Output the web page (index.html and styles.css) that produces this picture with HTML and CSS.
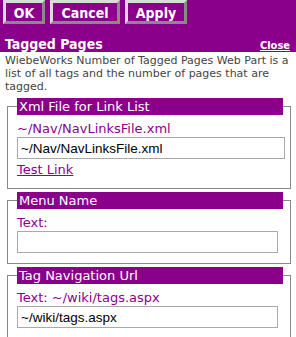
FILE: index.html
```html
<!DOCTYPE html>
<html>
<head>
<meta charset="utf-8">
<link rel="stylesheet" href="styles.css">
</head>
<body>
<div class="toolbar">
  <div class="buttons">
    <button class="btn">OK</button>
    <button class="btn">Cancel</button>
    <button class="btn">Apply</button>
  </div>
  <div class="title-row">
    <span class="title">Tagged Pages</span>
    <a class="close" href="#">Close</a>
  </div>
</div>
<p class="desc">WiebeWorks Number of Tagged Pages Web Part is a list of all tags and the number of pages that are tagged.</p>
<fieldset class="group">
  <legend class="legend">Xml File for Link List</legend>
  <div class="label">~/Nav/NavLinksFile.xml</div>
  <input class="field wide" type="text" value="~/Nav/NavLinksFile.xml">
  <a class="link" href="#">Test Link</a>
</fieldset>
<fieldset class="group">
  <legend class="legend">Menu Name</legend>
  <div class="label">Text:</div>
  <input class="field" type="text" value="">
</fieldset>
<fieldset class="group">
  <legend class="legend">Tag Navigation Url</legend>
  <div class="label">Text: ~/wiki/tags.aspx</div>
  <input class="field" type="text" value="~/wiki/tags.aspx">
</fieldset>
</body>
</html>
```
FILE: styles.css
```css
html, body {
  margin: 0;
  padding: 0;
  background: #fff;
}
body {
  width: 296px;
  font-family: "DejaVu Sans", Verdana, sans-serif;
}
.toolbar {
  background: #8b008b;
  height: 52px;
  display: flex;
  flex-direction: column;
}
.buttons {
  display: flex;
  gap: 5px;
}
.btn {
  background: #8b008b;
  color: #fff;
  font: bold 14px/16px "DejaVu Sans Condensed", "DejaVu Sans", sans-serif;
  border: 3px solid;
  border-color: #dcdcdc #8a8a8a #8a8a8a #dcdcdc;
  padding: 1px 0 0;
  height: 24px;
  margin: 0;
  box-sizing: border-box;
}
.btn:nth-child(1) { width: 42px; margin-left: 3px; }
.btn:nth-child(2) { width: 70px; }
.btn:nth-child(3) { width: 62px; }
.title-row {
  display: flex;
  justify-content: space-between;
  align-items: baseline;
  padding: 12px 6px 0 5px;
}
.title {
  color: #fff;
  font: bold 14px/16px "DejaVu Sans Condensed", "DejaVu Sans", sans-serif;
}
.close {
  color: #fff;
  font: bold 11px/13px "DejaVu Sans Condensed", "DejaVu Sans", sans-serif;
}
.desc {
  margin: 2px 5px 0 5px;
  color: #444;
  font-size: 11px;
  line-height: 13px;
}
.group {
  margin: 5px 5px 0 7px;
  border: 1px solid #888;
  padding: 0 5px 10px 9px;
  min-width: 0;
}
.group + .group { margin-top: 3px; }
.legend {
  background: #8b008b;
  color: #fff;
  font-size: 13px;
  line-height: 17px;
  padding: 0 2px;
  width: 266px;
  box-sizing: border-box;
}
.label {
  color: #8b008b;
  font-size: 13px;
  line-height: 16px;
  margin-top: 6px;
}
.field {
  display: block;
  box-sizing: border-box;
  width: 261px;
  height: 22px;
  margin: 0;
  border: 1px solid #a9a9a9;
  padding: 0 3px;
  font: 13.5px "Liberation Sans", Arial, sans-serif;
  color: #000;
  background: #fff;
}
.field.wide { width: 268px; }
.link {
  display: inline-block;
  color: #8b008b;
  font-size: 13px;
  line-height: 15px;
  margin-top: 2px;
  margin-bottom: -1px;
}
```
